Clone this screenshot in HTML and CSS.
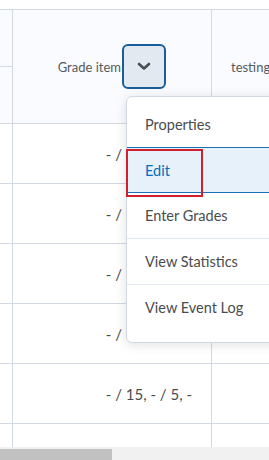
FILE: index.html
```html
<!DOCTYPE html>
<html lang="en">
<head>
  <meta charset="UTF-8">
  <title>Grades</title>
  <link rel="stylesheet" href="styles.css">
</head>
<body>
  <div class="page">
    <div class="grid-wrap">
      <table class="grades">
        <tr class="head">
          <td class="side side-top"></td>
          <th class="item" rowspan="2">
            <span class="item-name">Grade item</span>
            <button class="ctx-btn" aria-label="Actions for Grade item">
              <svg width="14" height="9" viewBox="0 0 14 9"><path d="M2 2 L7 6.5 L12 2" fill="none" stroke="#494c4e" stroke-width="2.6" stroke-linecap="round" stroke-linejoin="round"/></svg>
            </button>
          </th>
          <th class="next" rowspan="2">testing item</th>
        </tr>
        <tr class="head">
          <td class="side"></td>
        </tr>
        <tr><td class="side"></td><td class="score">- / 15, - / 5, -</td><td></td></tr>
        <tr><td class="side"></td><td class="score">- / 15, - / 5, -</td><td></td></tr>
        <tr><td class="side"></td><td class="score">- / 15, - / 5, -</td><td></td></tr>
        <tr><td class="side"></td><td class="score">- / 15, - / 5, -</td><td></td></tr>
        <tr><td class="side"></td><td class="score">- / 15, - / 5, -</td><td></td></tr>
        <tr><td class="side"></td><td class="score"></td><td></td></tr>
      </table>
    </div>
    <div class="hscroll"><div class="thumb"></div></div>
  </div>

  <!-- menu aberto do botão -->
  <ul class="menu">
    <li>Properties</li>
    <li class="active">Edit</li>
    <li>Enter Grades</li>
    <li>View Statistics</li>
    <li>View Event Log</li>
  </ul>
  <div class="highlight-box"></div>
</body>
</html>
```

FILE: styles.css
```css
html, body {
  margin: 0;
  padding: 0;
}
body {
  font-family: Lato, "Open Sans", sans-serif;
  color: #494c4e;
  background-color: #fff;
  width: 269px;
  height: 460px;
  overflow: hidden;
  position: relative;
}
.page {
  display: flex;
  flex-direction: column;
  height: 460px;
}
.grid-wrap {
  flex: 1;
  overflow: hidden;
  padding-top: 9px;
}
.grades {
  border-collapse: collapse;
  table-layout: fixed;
  width: 360px;
}
.grades td, .grades th {
  border: 1px solid #d3d9e3;
  padding: 0;
  height: 59px;
}
.grades .side {
  width: 12px;
  border-left: none;
}
.head td, .head th {
  background-color: #f9fbff;
  height: 56px;
}
.grades .item {
  width: 198px;
  font-weight: normal;
  font-size: 13px;
  color: #565a5c;
  text-align: center;
}
.item-name {
  vertical-align: middle;
}
.ctx-btn {
  display: inline-flex;
  align-items: center;
  justify-content: center;
  vertical-align: middle;
  width: 44px;
  height: 45px;
  margin-left: -2px;
  padding: 0;
  background-color: #e3e9f1;
  border: 2px solid #1a5d97;
  border-radius: 6px;
}
.grades .next {
  font-weight: normal;
  font-size: 13px;
  color: #565a5c;
  text-align: left;
  padding-left: 19px;
  white-space: nowrap;
  overflow: hidden;
}
.grades .score {
  text-align: right;
  padding-right: 19px;
  font-size: 15px;
  color: #494c4e;
}
.hscroll {
  height: 13px;
  background-color: #f1f1f1;
  display: flex;
  align-items: flex-end;
}
.thumb {
  width: 112px;
  height: 11px;
  background-color: #c1c1c1;
}
.menu {
  position: absolute;
  left: 126px;
  top: 96px;
  width: 180px;
  margin: 0;
  padding: 4px 0 12px;
  list-style: none;
  background-color: #fff;
  border: 1px solid #d3d9e3;
  border-radius: 6px;
  box-shadow: 0 2px 12px rgba(0,0,0,0.12);
}
.menu li {
  height: 45px;
  line-height: 45px;
  padding-left: 18px;
  font-size: 14.5px;
  color: #494c4e;
  border-top: 1px solid #e3e9f1;
}
.menu li:first-child {
  border-top-color: transparent;
}
.menu li.active {
  background-color: #e6f1fa;
  color: #006fbf;
  border-top: 1px solid #1c6fb5;
  border-bottom: 1px solid #1c6fb5;
  height: 44px;
}
.menu li.active + li {
  border-top: none;
}
.highlight-box {
  position: absolute;
  left: 126px;
  top: 149px;
  width: 73px;
  height: 44px;
  border: 2px solid #d0202e;
}
```
